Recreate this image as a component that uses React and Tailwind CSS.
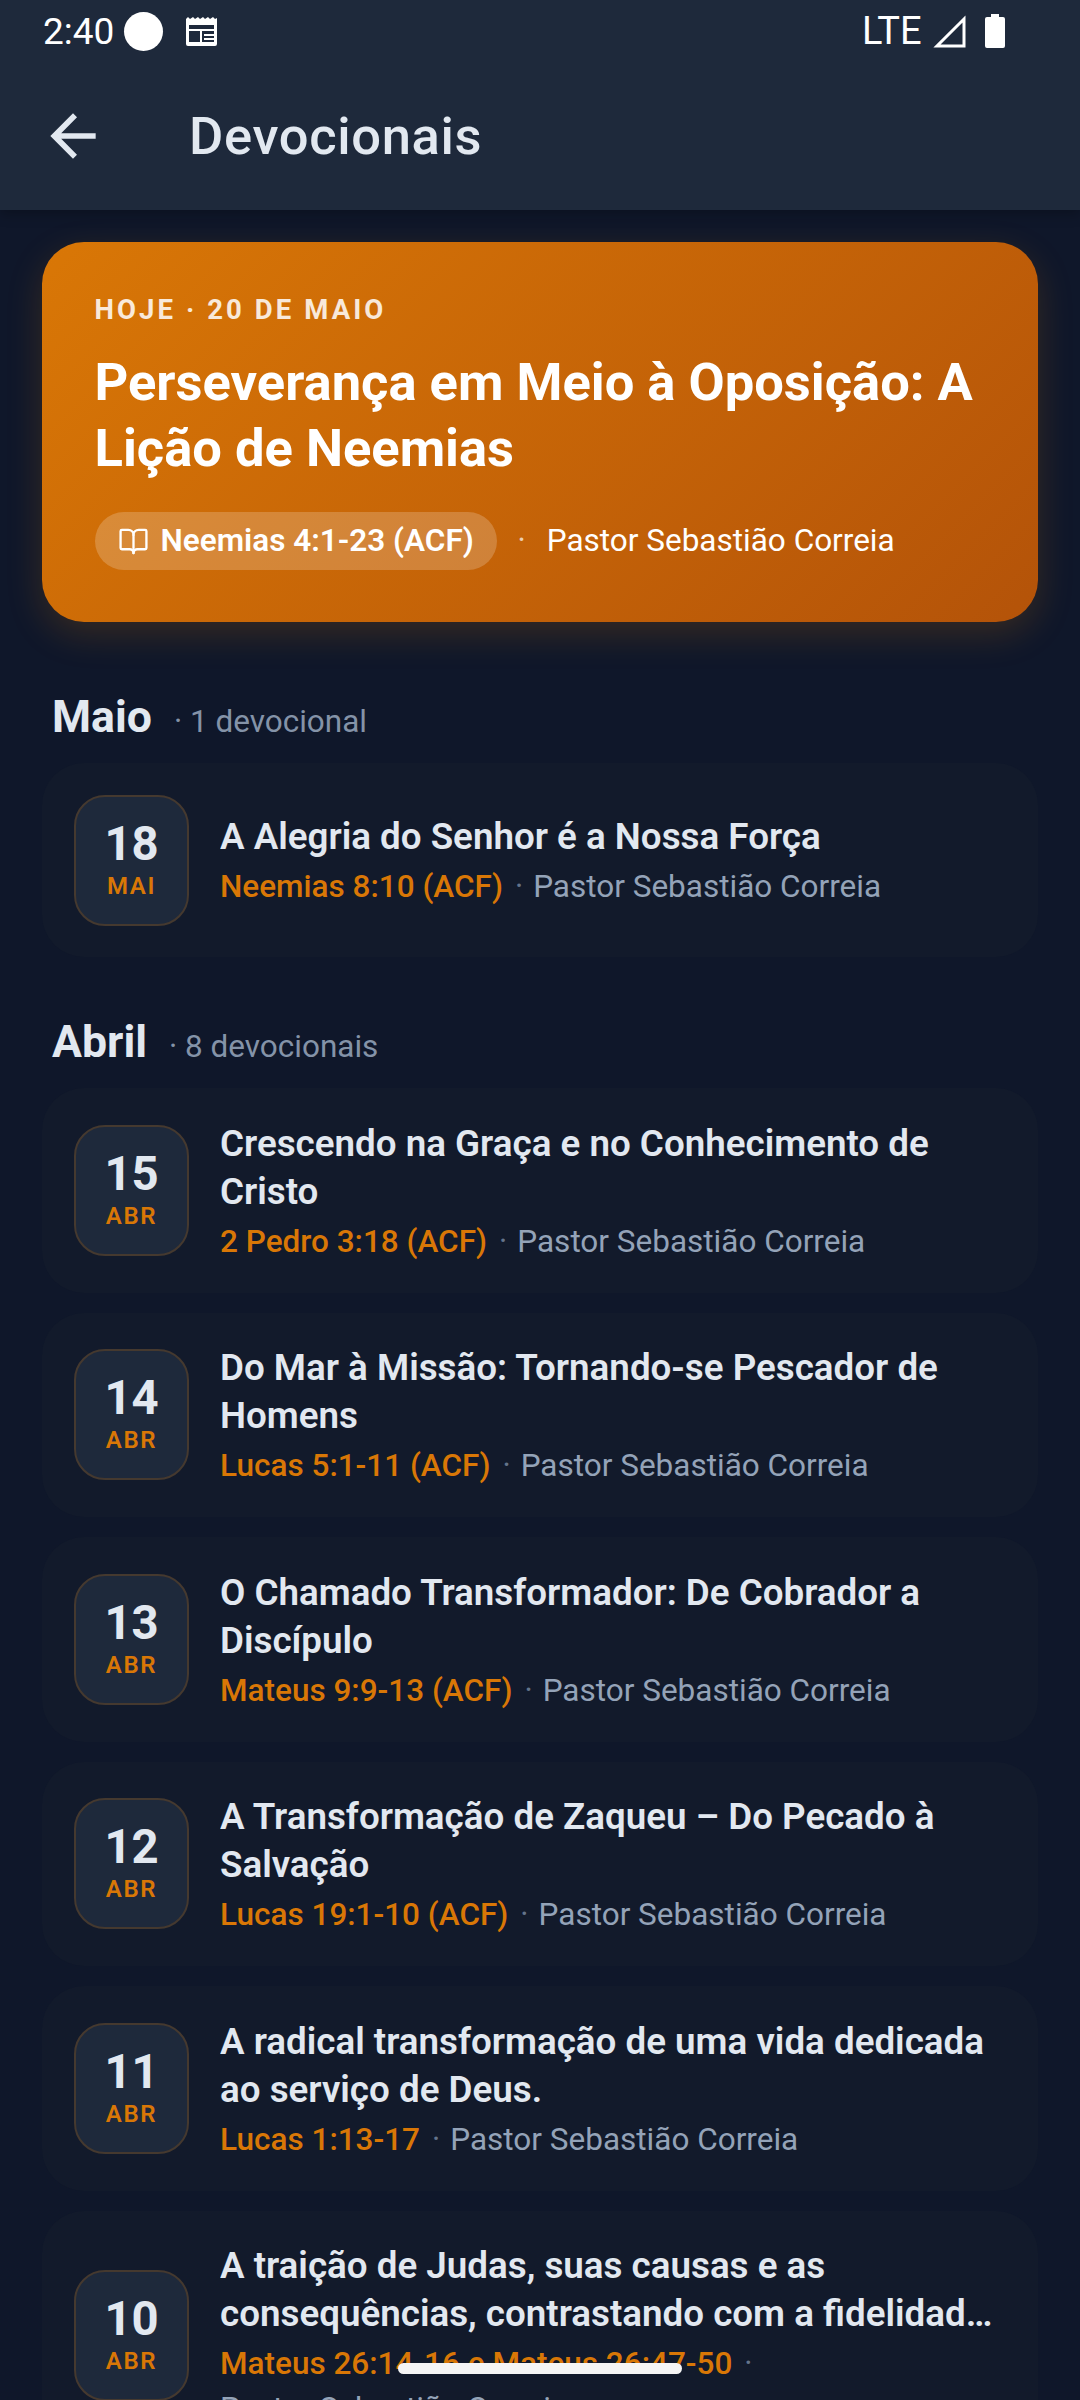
import React from "react";
import { BookOpen } from "lucide-react";
import { MdArrowBack } from "react-icons/md";

const april = [
  { day: "15", title: "Crescendo na Graça e no Conhecimento de Cristo", ref: "2 Pedro 3:18 (ACF)" },
  { day: "14", title: "Do Mar à Missão: Tornando-se Pescador de Homens", ref: "Lucas 5:1-11 (ACF)" },
  { day: "13", title: "O Chamado Transformador: De Cobrador a Discípulo", ref: "Mateus 9:9-13 (ACF)" },
  { day: "12", title: "A Transformação de Zaqueu – Do Pecado à Salvação", ref: "Lucas 19:1-10 (ACF)" },
  { day: "11", title: "A radical transformação de uma vida dedicada ao serviço de Deus.", ref: "Lucas 1:13-17" },
  { day: "10", title: "A traição de Judas, suas causas e as consequências, contrastando com a fidelidade de Jesus", ref: "Mateus 26:14-16 e Mateus 26:47-50" },
];

function StatusBar() {
  return (
    <div className="h-[62px] flex items-center justify-between pl-[43px] pr-[75px] text-white text-[37px] leading-none">
      <div className="flex items-center">
        <span className="w-[73px]">2:40</span>
        <span className="ml-[8px] w-[39px] h-[39px] rounded-full bg-white" />
        <svg className="ml-[22px]" width="33" height="30" viewBox="0 0 33 30" fill="none">
          <path d="M1 3l2-2 2 2 3-2 2 2 3-2 2 2 3-2 2 2 3-2 2 2 3-2 2 2 2-1v26a2 2 0 0 1-2 2H3a2 2 0 0 1-2-2z" fill="#fff" />
          <rect x="4" y="9" width="25" height="17" fill="#1e293b" />
          <rect x="4" y="13" width="25" height="2" fill="#fff" />
          <rect x="15" y="13" width="2" height="13" fill="#fff" />
          <rect x="19" y="18" width="10" height="2" fill="#fff" />
          <rect x="19" y="22" width="10" height="2" fill="#fff" />
        </svg>
      </div>
      <div className="flex items-center">
        <span className="w-[59px] text-[38px]">LTE</span>
        <svg className="ml-[12px]" width="33" height="33" viewBox="0 0 33 33" fill="none">
          <path d="M31 4v27H4z" stroke="#fff" strokeWidth="3" />
        </svg>
        <svg className="ml-[19px]" width="20" height="34" viewBox="0 0 20 34">
          <path d="M6 0h8v3h4a2 2 0 0 1 2 2v27a2 2 0 0 1-2 2H2a2 2 0 0 1-2-2V5a2 2 0 0 1 2-2h4z" fill="#fff" />
        </svg>
      </div>
    </div>
  );
}

function DevoCard({ day, month, title, refText }) {
  return (
    <div className="flex items-center rounded-[42px] bg-[#121a2b] px-[32px] py-[31.5px]">
      <div className="w-[115px] h-[131px] shrink-0 rounded-[31px] border-2 border-[#45392f] bg-[#1e293b] flex flex-col items-center justify-center">
        <span className="text-[47.25px] leading-[52px] font-bold text-[#e2e8f0]">{day}</span>
        <span className="text-[24px] leading-[33px] font-semibold tracking-[1.6px] text-[#d97706]">{month}</span>
      </div>
      <div className="ml-[31px] min-w-0 flex-1">
        <div className="text-[36.75px] leading-[48px] font-semibold text-[#e2e8f0] line-clamp-2">{title}</div>
        <div className="mt-[7px] text-[31.5px] leading-[38.5px] flex flex-wrap items-center gap-y-[6.5px]">
          <span className="font-medium text-[#d97706]">{refText}</span>
          <span className="ml-[12px] mr-[10px] text-[#64748b]">·</span>
          <span className="text-[#94a3b8]">Pastor Sebastião Correia</span>
        </div>
      </div>
    </div>
  );
}

function SectionTitle({ name, count }) {
  return (
    <div className="flex items-baseline pl-[10px] h-[56px] mb-[18.5px]">
      <span className="text-[44.6px] leading-[56px] font-bold text-[#e2e8f0]">{name}</span>
      <span className="ml-[22px] text-[31.5px] text-[#8493a8]">· {count}</span>
    </div>
  );
}

export default function App() {
  return (
    <div className="relative w-[1080px] h-[2400px] overflow-hidden bg-[#0f172a] font-['Roboto',sans-serif]">
      <header className="h-[210px] bg-[#1e293b] shadow-[0_4px_12px_rgba(0,0,0,0.25)]">
        <StatusBar />
        <div className="flex items-center h-[148px]">
          <MdArrowBack size={68} className="ml-[39px] text-[#e2e8f0]" />
          <h1 className="ml-[82px] text-[52.5px] font-medium tracking-[0.66px] text-[#e2e8f0]">Devocionais</h1>
        </div>
      </header>

      <main className="px-[42px] pt-[32px]">
        <section className="h-[380px] rounded-[42px] bg-[linear-gradient(135deg,#d97706,#b45309)] px-[52.5px] pt-[50px] shadow-[0_12px_36px_rgba(217,119,6,0.2)]">
          <div className="text-[27.5px] leading-[36px] font-bold tracking-[3.08px] text-white/85">HOJE · 20 DE MAIO</div>
          <h2 className="mt-[21px] text-[52.5px] leading-[66px] font-bold text-white">Perseverança em Meio à Oposição: A Lição de Neemias</h2>
          <div className="mt-[31px] flex items-center">
            <div className="h-[58px] w-[402px] rounded-full bg-white/20 flex items-center pl-[23px]">
              <BookOpen size={31} strokeWidth={1.8} className="text-white" />
              <span className="ml-[12px] text-[31.5px] font-semibold text-white whitespace-nowrap">Neemias 4:1-23 (ACF)</span>
            </div>
            <span className="ml-[21px] text-[31.5px] text-white/70">·</span>
            <span className="ml-[21px] text-[31.5px] text-white">Pastor Sebastião Correia</span>
          </div>
        </section>

        <div className="mt-[66.5px]">
          <SectionTitle name="Maio" count="1 devocional" />
          <DevoCard day="18" month="MAI" title="A Alegria do Senhor é a Nossa Força" refText="Neemias 8:10 (ACF)" />
        </div>

        <div className="mt-[56.5px]">
          <SectionTitle name="Abril" count="8 devocionais" />
          <div className="flex flex-col gap-[20px]">
            {april.map((d) => (
              <DevoCard key={d.day} day={d.day} month="ABR" title={d.title} refText={d.ref} />
            ))}
          </div>
        </div>
      </main>

      <div className="absolute left-[398px] top-[2363px] w-[284px] h-[11px] rounded-full bg-[#f5f5f5]" />
    </div>
  );
}
